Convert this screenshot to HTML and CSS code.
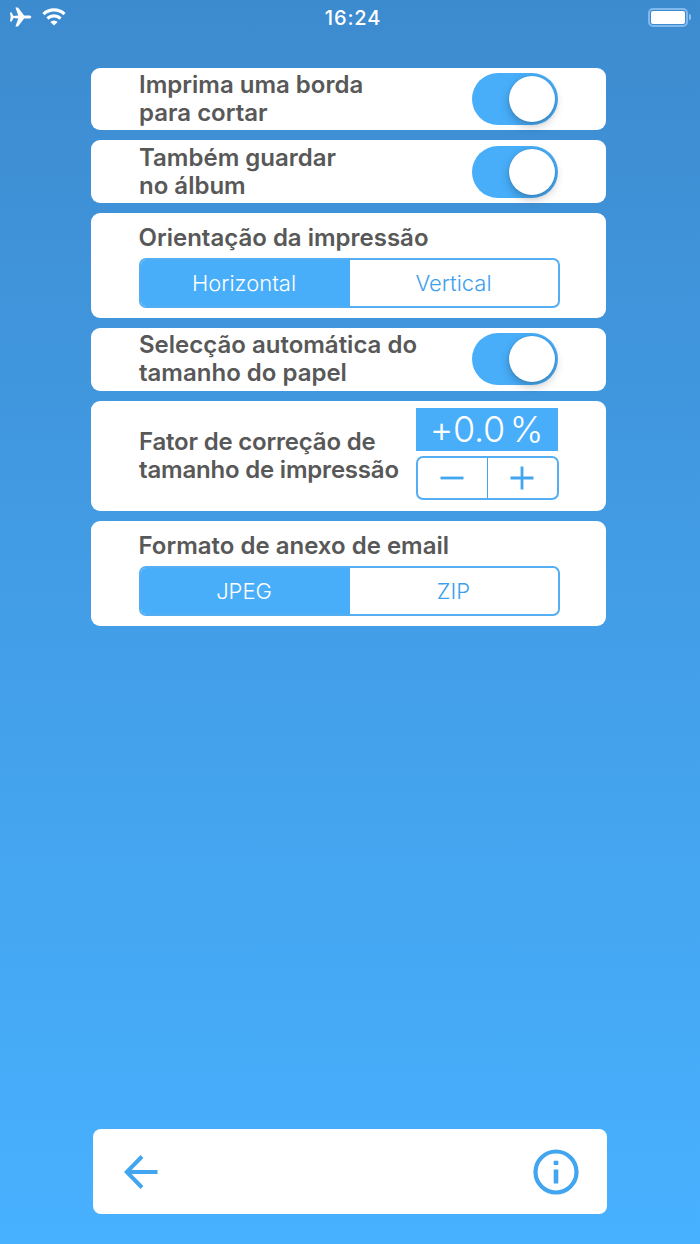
FILE: index.html
```html
<!DOCTYPE html>
<html lang="pt">
	<head>
		<meta charset="utf-8" />
		<title>Imprimir</title>
		<link rel="stylesheet" href="styles.css">
	</head>
	<body>
		<div class="screen">
			<!--status bar-->
			<div class="status">
				<div class="status-left">
					<svg class="plane" width="22" height="20" viewBox="0 0 22 20"><path d="M21.3 10c0-.9-1-1.500-2.200-1.500h-5L8 .6H5.400l2.900 7.900-4.800.4L1.600 5.500H0l.7 4.500L0 14.500h1.600l1.900-3.400 4.800.4-2.900 7.900H8l6.100-7.900h5c1.200 0 2.200-.6 2.200-1.500z" fill="#fff"/></svg>
					<svg class="wifi" width="24" height="18" viewBox="0 0 24 18"><path d="M1.5 6.100a15.200 15.200 0 0 1 21 0M5.400 10.500a9.600 9.600 0 0 1 13.200 0" fill="none" stroke="#fff" stroke-width="3.200"/><path d="M12 17.500l-3.700-3.500a5.300 5.300 0 0 1 7.400 0z" fill="#fff"/></svg>
				</div>
				<div class="time">16:24</div>
				<div class="battery">
					<div class="battery-body"><div class="battery-level"></div></div>
					<div class="battery-tip"></div>
				</div>
			</div>
			<!--settings-->
			<div class="list">
				<div class="card row">
					<p class="label">Imprima uma borda<br>para cortar</p>
					<div class="switch"><div class="knob"></div></div>
				</div>
				<div class="card row">
					<p class="label">Também guardar<br>no álbum</p>
					<div class="switch"><div class="knob"></div></div>
				</div>
				<div class="card choice">
					<p class="label">Orientação da impressão</p>
					<div class="segment">
						<div class="option current">Horizontal</div>
						<div class="option">Vertical</div>
					</div>
				</div>
				<div class="card row">
					<p class="label">Selecção automática do<br>tamanho do papel</p>
					<div class="switch"><div class="knob"></div></div>
				</div>
				<div class="card row factor">
					<p class="label">Fator de correção de<br>tamanho de impressão</p>
					<div class="adjust">
						<div class="value">+0.0 %</div>
						<div class="stepper">
							<div class="step"><svg width="24" height="24" viewBox="0 0 24 24"><path d="M.5 12h23"/></svg></div>
							<div class="step"><svg width="24" height="24" viewBox="0 0 24 24"><path d="M.5 12h23M12 .5v23"/></svg></div>
						</div>
					</div>
				</div>
				<div class="card choice">
					<p class="label">Formato de anexo de email</p>
					<div class="segment">
						<div class="option current">JPEG</div>
						<div class="option">ZIP</div>
					</div>
				</div>
			</div>
			<!--toolbar-->
			<div class="toolbar">
				<svg width="34" height="34" viewBox="0 0 34 34"><path d="M33.500 17H3M18 1.500L2.800 17 18 32.500" fill="none" stroke="#42a5f0" stroke-width="4"/></svg>
				<svg width="46" height="46" viewBox="0 0 46 46"><circle cx="23" cy="23" r="20.500" fill="none" stroke="#42a5f0" stroke-width="4.200"/><path d="M20.700 11.800h4.600v4.200h-4.600zM20.700 20.500h4.600v14h-4.600z" fill="#42a5f0"/></svg>
			</div>
		</div>
	</body>
</html>
```
FILE: styles.css
```css
body,div,p{
	margin: 0;
	padding: 0;
	box-sizing: border-box;
}
svg{
	display: block;
}
body{
	font-family: Inter, "Liberation Sans", sans-serif;
}
.screen{
	display: flex;
	flex-direction: column;
	width: 700px;
	height: 1244px;
	background: linear-gradient(#3d8bcf, #48b1ff);
	overflow: hidden;
}
.status{
	display: grid;
	grid-template-columns: 1fr auto 1fr;
	align-items: center;
	height: 34px;
	padding: 0 9px 0 10px;
	color: #fff;
}
.status-left{
	display: flex;
	align-items: center;
	gap: 10px;
}
.time{
	font-size: 20px;
	font-weight: 500;
	letter-spacing: 0.9px;
	padding: 2px 0 0 5px;
}
.battery{
	display: flex;
	align-items: center;
	justify-content: flex-end;
	gap: 1px;
}
.battery-body{
	width: 40px;
	height: 19px;
	padding: 1px;
	border: 2px solid #7fb9ee;
	border-radius: 5px;
}
.battery-level{
	height: 100%;
	background: #fff;
	border-radius: 2px;
}
.battery-tip{
	width: 2px;
	height: 6px;
	background: #8fc3f3;
	border-radius: 0 3px 3px 0;
}
.list{
	display: flex;
	flex-direction: column;
	gap: 10px;
	width: 514.5px;
	margin: 33.6px 0 0 91px;
}
.card{
	padding: 0 48px;
	background: #fff;
	border-radius: 9px;
}
.row{
	display: flex;
	align-items: center;
	justify-content: space-between;
	height: 62.7px;
}
.choice{
	height: 105px;
	padding: 11px 46px 0 47.5px;
}
.label{
	font-size: 24px;
	line-height: 28px;
	font-weight: 600;
	color: #585858;
	white-space: nowrap;
}
.switch{
	display: flex;
	justify-content: flex-end;
	width: 86px;
	height: 52px;
	padding: 3px;
	background: #48aefa;
	border-radius: 26px;
}
.knob{
	width: 46px;
	height: 46px;
	background: #fff;
	border-radius: 50%;
	box-shadow: 0 4px 10px rgba(0, 0, 0, 0.25), 0 0 2px rgba(0, 0, 0, 0.15);
}
.segment{
	display: grid;
	grid-template-columns: 209px 1fr;
	height: 50px;
	margin-top: 6px;
	border: 2px solid #55adf2;
	border-radius: 7px;
	overflow: hidden;
}
.option{
	font-size: 22px;
	line-height: 47px;
	font-weight: 300;
	text-align: center;
	color: #3d9feb;
}
.option.current{
	color: #fff;
	background: #48aefa;
}
.segment .current{
	padding-right: 2px;
}
.factor{
	height: 110px;
}
.factor .label{
	letter-spacing: -0.2px;
}
.adjust{
	width: 142px;
	margin-top: -4px;
}
.value{
	height: 43px;
	font-size: 36px;
	line-height: 43px;
	font-weight: 300;
	word-spacing: -5px;
	letter-spacing: -0.3px;
	text-align: center;
	color: #fff;
	background: #48aefa;
}
.stepper{
	display: flex;
	width: 143px;
	height: 44px;
	margin-top: 5px;
	border: 2px solid #55adf2;
	border-radius: 7px;
}
.step{
	display: flex;
	flex: 1;
	align-items: center;
	justify-content: center;
}
.step + .step{
	border-left: 1px solid #42a5f0;
}
.step path{
	fill: none;
	stroke: #42a5f0;
	stroke-width: 2.8;
}
.toolbar{
	display: flex;
	align-items: center;
	justify-content: space-between;
	width: 514px;
	height: 85px;
	margin: auto 0 30px 93px;
	padding: 0 28px 0 30.5px;
	background: #fff;
	border-radius: 8px;
}
```
